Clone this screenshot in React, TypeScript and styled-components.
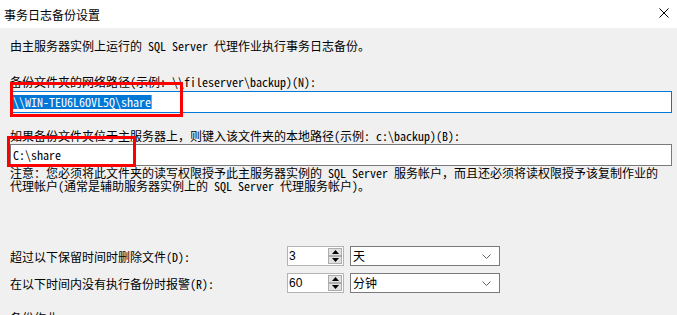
import type { FC } from "react";
import styled, { createGlobalStyle } from "styled-components";

const FONT = `"Noto Sans Mono CJK SC", "Noto Sans CJK SC", "Liberation Mono", monospace`;

const GlobalStyle = createGlobalStyle`
  html, body {
    margin: 0;
    padding: 0;
    background: #f0f0f0;
  }
  body {
    font-family: ${FONT};
    font-size: 12px;
    color: #000000;
  }
`;

const Window = styled.div`
  position: relative;
  width: 677px;
  height: 315px;
  overflow: hidden;
  background: #f0f0f0;
`;

const TitleBar = styled.header`
  height: 28px;
  background: #ffffff;
  display: flex;
  align-items: center;
  justify-content: space-between;
  padding: 0 8px 0 4px;
  box-sizing: border-box;
`;

const Title = styled.span`
  font-size: 12px;
  line-height: 14px;
  margin-top: 1px;
`;

const CloseIcon = styled.svg`
  width: 10px;
  height: 10px;
  margin-top: -2px;
`;

const Body = styled.main`
  padding: 11px 5px 0 10px;
`;

const Text = styled.p<{ $top?: number }>`
  margin: ${(p) => p.$top ?? 0}px 0 0 0;
  line-height: 13px;
  white-space: nowrap;
`;

const Field = styled.div<{ $focused?: boolean; $top: number }>`
  margin-top: ${(p) => p.$top}px;
  height: 22px;
  box-sizing: border-box;
  border: 1px solid ${(p) => (p.$focused ? "#0078d7" : "#7a7a7a")};
  background: #ffffff;
  display: flex;
  align-items: center;
  padding-left: 1px;
  line-height: 14px;
  white-space: nowrap;
`;

const Selected = styled.span`
  background: #0078d7;
  color: #ffffff;
  padding: 0 0 0 1px;
  border-right: 1px solid #ff8c00;
`;

const Plain = styled.span`
  padding-left: 1px;
`;

const OptionRow = styled.div<{ $top: number }>`
  margin-top: ${(p) => p.$top}px;
  display: flex;
  align-items: center;
  height: 20px;
`;

const OptionLabel = styled.span`
  width: 277px;
  line-height: 13px;
`;

const Spin = styled.div`
  display: flex;
  height: 20px;
  width: 57px;
  box-sizing: border-box;
  border: 1px solid #b4b4b4;
  background: #ffffff;
`;

const SpinValue = styled.span`
  flex: 1;
  font-family: "Liberation Sans", Arial, sans-serif;
  font-size: 12px;
  line-height: 18px;
  padding-left: 1px;
`;

const SpinButtons = styled.div`
  width: 14px;
  display: flex;
  flex-direction: column;
  gap: 0;
  padding: 1px 1px 1px 0;
`;

const SpinButton = styled.div`
  flex: 1;
  background: #e1e1e1;
  border: 1px solid #adadad;
  display: flex;
  align-items: center;
  justify-content: center;
`;

const Combo = styled.div`
  margin-left: 6px;
  width: 150px;
  height: 20px;
  box-sizing: border-box;
  border: 1px solid #7a7a7a;
  background: #ffffff;
  display: flex;
  align-items: center;
  justify-content: space-between;
  padding: 0 8px 0 2px;
  line-height: 14px;
`;

const Callout = styled.div<{ $left: number; $top: number; $w: number; $h: number }>`
  position: absolute;
  left: ${(p) => p.$left}px;
  top: ${(p) => p.$top}px;
  width: ${(p) => p.$w}px;
  height: ${(p) => p.$h}px;
  box-sizing: border-box;
  border: 3px solid #ff0000;
  pointer-events: none;
`;

const Arrow: FC<{ up?: boolean }> = ({ up }) => (
  <svg width="7" height="4" viewBox="0 0 7 4">
    <path d={up ? "M0 4 L3.5 0 L7 4 Z" : "M0 0 L3.5 4 L7 0 Z"} fill="#000" />
  </svg>
);

const Chevron = () => (
  <svg width="9" height="5" viewBox="0 0 9 5">
    <path d="M0.5 0.5 L4.5 4.5 L8.5 0.5" stroke="#606060" fill="none" strokeWidth="1" />
  </svg>
);

const NumberSpin: FC<{ value: string }> = ({ value }) => (
  <Spin>
    <SpinValue>{value}</SpinValue>
    <SpinButtons>
      <SpinButton>
        <Arrow up />
      </SpinButton>
      <SpinButton>
        <Arrow />
      </SpinButton>
    </SpinButtons>
  </Spin>
);

const App: FC = () => (
  <>
    <GlobalStyle />
    <Window>
      <TitleBar>
        <Title>事务日志备份设置</Title>
        <CloseIcon viewBox="0 0 10 10">
          <path d="M0.5 0.5 L9.5 9.5 M9.5 0.5 L0.5 9.5" stroke="#000" strokeWidth="1" />
        </CloseIcon>
      </TitleBar>

      <Body>
        <Text>由主服务器实例上运行的 SQL Server 代理作业执行事务日志备份。</Text>

        <Text $top={23}>备份文件夹的网络路径(示例: \\fileserver\backup)(N):</Text>
        <Field $focused $top={3}>
          <Selected>\\WIN-TEU6L6OVL5Q\share</Selected>
        </Field>

        <Text $top={16}>如果备份文件夹位于主服务器上，则键入该文件夹的本地路径(示例: c:\backup)(B):</Text>
        <Field $top={2}>
          <Plain>C:\share</Plain>
        </Field>

        <Text>注意：您必须将此文件夹的读写权限授予此主服务器实例的 SQL Server 服务帐户，而且还必须将读权限授予该复制作业的</Text>
        <Text>代理帐户(通常是辅助服务器实例上的 SQL Server 代理服务帐户)。</Text>

        <OptionRow $top={54}>
          <OptionLabel>超过以下保留时间时删除文件(D):</OptionLabel>
          <NumberSpin value="3" />
          <Combo>
            <span>天</span>
            <Chevron />
          </Combo>
        </OptionRow>
        <OptionRow $top={7}>
          <OptionLabel>在以下时间内没有执行备份时报警(R):</OptionLabel>
          <NumberSpin value="60" />
          <Combo>
            <span>分钟</span>
            <Chevron />
          </Combo>
        </OptionRow>

        <Text $top={18}>备份作业</Text>
      </Body>

      <Callout $left={10} $top={82} $w={173} $h={35} />
      <Callout $left={7} $top={136} $w={129} $h={31} />
    </Window>
  </>
);

export default App;
